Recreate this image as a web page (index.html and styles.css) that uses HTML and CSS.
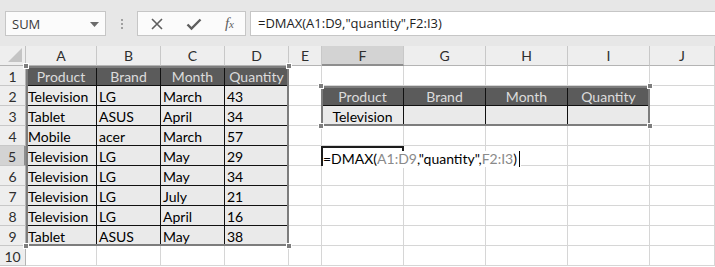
FILE: index.html
```html
<!DOCTYPE html>
<html>
<head>
<meta charset="utf-8">
<link rel="stylesheet" href="styles.css">
</head>
<body>
<div class="app">
  <div class="fbar">
    <div class="namebox">
      <span class="nb-text">SUM</span>
      <svg class="dd" width="9" height="5" viewBox="0 0 9 5"><path d="M0 0H9L4.5 5Z" fill="#6b6b6b"/></svg>
    </div>
    <div class="dots"><i></i><i></i><i></i></div>
    <div class="btns">
      <svg width="14" height="14" viewBox="0 0 14 14"><path d="M2 2L12 12M12 2L2 12" stroke="#5e5e5e" stroke-width="1.6" fill="none"/></svg>
      <svg width="16" height="14" viewBox="0 0 16 14"><path d="M1.5 7.5L5.5 11.5L14.5 2.5" stroke="#5e5e5e" stroke-width="2.4" fill="none"/></svg>
      <span class="fx">f<span class="fx-x">x</span></span>
    </div>
    <div class="finput">=DMAX(A1:D9,"quantity",F2:I3)</div>
  </div>

  <div class="sheet">
    <div class="grid">
      <div class="corner"><svg width="14" height="14" viewBox="0 0 14 14"><path d="M14 0V14H0Z" fill="#c4c4c4"/></svg></div>
      <div class="ch">A</div><div class="ch">B</div><div class="ch">C</div><div class="ch">D</div><div class="ch">E</div>
      <div class="ch ch-on">F</div><div class="ch">G</div><div class="ch">H</div><div class="ch">I</div><div class="ch">J</div>

      <div class="rh">1</div>
      <div class="c th">Product</div><div class="c th">Brand</div><div class="c th">Month</div><div class="c th">Quantity</div>
      <div class="c"></div><div class="c"></div><div class="c"></div><div class="c"></div><div class="c"></div><div class="c"></div>

      <div class="rh">2</div>
      <div class="c td">Television</div><div class="c td">LG</div><div class="c td">March</div><div class="c td">43</div>
      <div class="c"></div>
      <div class="c th">Product</div><div class="c th">Brand</div><div class="c th">Month</div><div class="c th">Quantity</div>
      <div class="c"></div>

      <div class="rh">3</div>
      <div class="c td">Tablet</div><div class="c td">ASUS</div><div class="c td">April</div><div class="c td">34</div>
      <div class="c"></div>
      <div class="c td tc">Television</div><div class="c td"></div><div class="c td"></div><div class="c td"></div>
      <div class="c"></div>

      <div class="rh">4</div>
      <div class="c td">Mobile</div><div class="c td">acer</div><div class="c td">March</div><div class="c td">57</div>
      <div class="c"></div><div class="c"></div><div class="c"></div><div class="c"></div><div class="c"></div><div class="c"></div>

      <div class="rh rh-on">5</div>
      <div class="c td">Television</div><div class="c td">LG</div><div class="c td">May</div><div class="c td">29</div>
      <div class="c"></div><div class="c"></div><div class="c"></div><div class="c"></div><div class="c"></div><div class="c"></div>

      <div class="rh">6</div>
      <div class="c td">Television</div><div class="c td">LG</div><div class="c td">May</div><div class="c td">34</div>
      <div class="c"></div><div class="c"></div><div class="c"></div><div class="c"></div><div class="c"></div><div class="c"></div>

      <div class="rh">7</div>
      <div class="c td">Television</div><div class="c td">LG</div><div class="c td">July</div><div class="c td">21</div>
      <div class="c"></div><div class="c"></div><div class="c"></div><div class="c"></div><div class="c"></div><div class="c"></div>

      <div class="rh">8</div>
      <div class="c td">Television</div><div class="c td">LG</div><div class="c td">April</div><div class="c td">16</div>
      <div class="c"></div><div class="c"></div><div class="c"></div><div class="c"></div><div class="c"></div><div class="c"></div>

      <div class="rh">9</div>
      <div class="c td">Tablet</div><div class="c td">ASUS</div><div class="c td">May</div><div class="c td">38</div>
      <div class="c"></div><div class="c"></div><div class="c"></div><div class="c"></div><div class="c"></div><div class="c"></div>

      <div class="rh">10</div>
      <div class="c"></div><div class="c"></div><div class="c"></div><div class="c"></div>
      <div class="c"></div><div class="c"></div><div class="c"></div><div class="c"></div><div class="c"></div><div class="c"></div>
    </div>

    <div class="overlay">
      <div class="range r-data"><b class="h tl"></b><b class="h tr"></b><b class="h bl"></b><b class="h br"></b></div>
      <div class="range r-crit"><b class="h tl"></b><b class="h tr"></b><b class="h bl"></b><b class="h br"></b></div>
      <div class="active"><b class="fill"></b></div>
      <div class="editor"><span class="ed-text">=DMAX(<span class="ref">A1:D9</span>,"quantity",<span class="ref">F2:I3</span>)<i class="caret"></i></span></div>
    </div>
  </div>
</div>
</body>
</html>
```

FILE: styles.css
```css
* { box-sizing: border-box; }
html, body { margin: 0; padding: 0; }
body {
  width: 715px;
  height: 267px;
  overflow: hidden;
  background: #ffffff;
  font-family: Lato, "Noto Sans", sans-serif;
}

.app { width: 715px; }

/* formula bar */
.fbar {
  height: 46px;
  background: #e7e7e7;
  display: flex;
  padding: 11px 0 10px 5px;
}
.namebox {
  width: 101px;
  background: #fbfbfb;
  border: 1px solid #c6c6c6;
  display: flex;
  align-items: center;
  justify-content: space-between;
  padding: 0 6px 0 6px;
}
.nb-text {
  font-family: "Open Sans", sans-serif;
  font-size: 13px;
  color: #3a3a3a;
}
.dd { margin-top: 1px; }
.dots {
  width: 31px;
  display: flex;
  flex-direction: column;
  align-items: center;
  justify-content: center;
  gap: 2px;
}
.dots i {
  display: block;
  width: 2px;
  height: 2px;
  background: #a0a0a0;
}
.btns {
  width: 109px;
  background: #fbfbfb;
  border: 1px solid #c6c6c6;
  display: flex;
  align-items: center;
  justify-content: space-between;
  padding: 0 11px 0 12px;
}
.fx {
  font-family: "Liberation Serif", serif;
  font-style: italic;
  font-size: 15px;
  color: #5e5e5e;
  line-height: 1;
}
.fx-x { font-size: 11px; }
.finput {
  flex: 1;
  margin-left: 4px;
  background: #ffffff;
  border: 1px solid #c6c6c6;
  border-right: none;
  font-family: "Open Sans", sans-serif;
  font-size: 13px;
  color: #1e1e1e;
  padding: 1px 0 0 7px;
  line-height: 21px;
  white-space: nowrap;
}

/* sheet */
.sheet {
  position: relative;
  height: 221px;
}
.grid, .overlay {
  display: grid;
  grid-template-columns: 26px 71px 64px 64px 64px 33px 82px 82px 82px 82px 1fr;
  grid-template-rows: repeat(11, 20px);
}
.overlay {
  position: absolute;
  inset: 0;
  pointer-events: none;
}

.corner {
  background: #eeeeee;
  border-right: 1px solid #c2c2c2;
  border-bottom: 1px solid #b4b4b4;
  display: flex;
  align-items: flex-end;
  justify-content: flex-end;
  padding: 0 3px 3px 0;
}
.ch {
  background: #eeeeee;
  border-right: 1px solid #c8c8c8;
  border-bottom: 1px solid #b4b4b4;
  text-align: center;
  font-size: 14px;
  line-height: 20px;
  color: #2e2e2e;
}
.ch-on {
  background: #d3d3d3;
  border-bottom: 2px solid #8e8e8e;
}
.rh {
  background: #eeeeee;
  border-right: 1px solid #b4b4b4;
  border-bottom: 1px solid #c8c8c8;
  text-align: center;
  font-size: 14px;
  line-height: 21px;
  color: #2e2e2e;
}
.rh-on {
  background: #d3d3d3;
  border-right: 2px solid #8e8e8e;
}

.c {
  border-right: 1px solid #d6d6d6;
  border-bottom: 1px solid #d6d6d6;
  font-size: 14px;
  line-height: 21px;
  padding: 0 2px;
  white-space: nowrap;
  overflow: hidden;
  color: #000;
}
.th {
  background: #5b5b5b;
  color: #dcdcdc;
  text-align: center;
  border-right-color: #111;
  border-bottom-color: #111;
}
.td {
  background: #eaeaea;
  border-right-color: #111;
  border-bottom-color: #111;
}
.tc { text-align: center; }

/* overlays */
.range {
  position: relative;
  border: 2px solid #7d7d7d;
}
.r-data { grid-column: 2 / 6; grid-row: 2 / 11; }
.r-crit { grid-column: 7 / 11; grid-row: 3 / 5; margin-left: -1px; }
.h {
  position: absolute;
  width: 6px;
  height: 6px;
  background: #7d7d7d;
  border: 1px solid #ffffff;
}
.tl { left: -5px; top: -5px; }
.tr { right: -5px; top: -5px; }
.bl { left: -5px; bottom: -5px; }
.br { right: -5px; bottom: -5px; }

.active {
  grid-column: 7 / 8;
  grid-row: 6 / 7;
  margin-left: -1px;
  border: 2px solid #1c1c1c;
  position: relative;
}
.fill {
  position: absolute;
  right: -4px;
  bottom: -4px;
  width: 6px;
  height: 6px;
  background: #1c1c1c;
  border: 1px solid #ffffff;
}
.editor {
  grid-column: 7 / 11;
  grid-row: 6 / 7;
  padding: 2px 0 0 1px;
  position: relative;
}
.ed-text {
  display: inline-flex;
  align-items: center;
  height: 16px;
  background: #ffffff;
  font-size: 14px;
  color: #000;
  white-space: pre;
  padding-right: 1px;
}
.ref { color: #8a8a8a; }
.caret {
  display: inline-block;
  width: 1px;
  height: 16px;
  background: #000;
  margin-left: 2px;
}
```
